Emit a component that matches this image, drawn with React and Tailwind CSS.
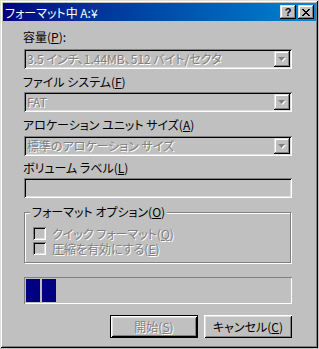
import React from 'react'

const jp = "font-['Noto_Sans_CJK_JP',sans-serif] [font-feature-settings:'palt']"
const sunken = 'shadow-[inset_1px_1px_#808080,inset_-1px_-1px_#fff,inset_2px_2px_#000,inset_-2px_-2px_#dfdfdf]'
const raised = 'shadow-[inset_-1px_-1px_#000,inset_1px_1px_#dfdfdf,inset_-2px_-2px_#808080,inset_2px_2px_#fff]'
const grayText = 'text-[#808080] [text-shadow:1px_1px_0_#fff]'

const Key = ({ children }) => <span className="underline underline-offset-1">{children}</span>

const Label = ({ children, className = '' }) => (
  <div className={`h-[14px] whitespace-nowrap text-[12px] leading-[14px] text-black ${className}`}>{children}</div>
)

const Arrow = () => (
  <svg width="8" height="5" viewBox="0 0 8 5">
    <path d="M1 1h7L4.5 5z" fill="#fff" />
    <path d="M0 0h7L3.5 4z" fill="#808080" />
  </svg>
)

const Combo = ({ value, className = '' }) => (
  <div className={`ml-[1px] flex h-[20px] w-[268px] items-center bg-[#c0c0c0] ${sunken} ${className}`}>
    <span className={`flex-1 whitespace-nowrap pl-[3px] text-[12px] leading-[14px] ${grayText}`}>{value}</span>
    <div className={`mr-[2px] flex h-[16px] w-[16px] shrink-0 items-center justify-center ${raised}`}>
      <Arrow />
    </div>
  </div>
)

const Check = ({ children }) => (
  <div className="flex h-[13px] items-center gap-[6px]">
    <div className={`h-[13px] w-[13px] shrink-0 bg-[#c0c0c0] ${sunken}`} />
    <span className={`whitespace-nowrap text-[12px] leading-[13px] ${grayText}`}>{children}</span>
  </div>
)

export default function App() {
  return (
    <div className={`h-[349px] w-[319px] bg-[#c0c0c0] ${jp}`}>
      <div className="flex h-[348px] w-[318px] flex-col pl-[3px] pr-[2px] pt-[3px] shadow-[inset_1px_1px_#dfdfdf,inset_-1px_-1px_#000,inset_2px_2px_#fff,inset_-2px_-2px_#808080]">
        {/* title bar */}
        <div className="flex h-[18px] items-center bg-gradient-to-r from-[#000080] to-[#1084d0] pl-[2px] pr-[2px]">
          <span className="flex-1 pt-[1px] text-[12px] leading-[14px] text-white">フォーマット中 A:¥</span>
          <div className={`flex h-[14px] w-[16px] items-center justify-center bg-[#c0c0c0] ${raised}`}>
            <span className="font-['Liberation_Sans',sans-serif] text-[11px] font-bold leading-[11px] text-black">?</span>
          </div>
          <div className={`ml-[2px] flex h-[14px] w-[16px] items-center justify-center bg-[#c0c0c0] ${raised}`}>
            <svg width="8" height="7" viewBox="0 0 8 7" shapeRendering="crispEdges">
              <path d="M0 0h2v1h-2zM6 0h2v1h-2zM1 1h2v1h-2zM5 1h2v1h-2zM2 2h4v1h-4zM3 3h2v1h-2zM2 4h4v1h-4zM1 5h2v1h-2zM5 5h2v1h-2zM0 6h2v1h-2zM6 6h2v1h-2z" fill="#000" />
            </svg>
          </div>
        </div>

        {/* body */}
        <div className="flex flex-col pl-[20px]">
          <Label className="mt-[9px]">容量(<Key>P</Key>):</Label>
          <Combo className="mt-[5px]" value="3.5 インチ、1.44MB、512 バイト/セクタ" />

          <Label className="mt-[6px]">ファイル システム(<Key>F</Key>)</Label>
          <Combo className="mt-[3px]" value="FAT" />

          <Label className="mt-[6px]">アロケーション ユニット サイズ(<Key>A</Key>)</Label>
          <Combo className="mt-[4px]" value="標準のアロケーション サイズ" />

          <Label className="mt-[5px]">ボリューム ラベル(<Key>L</Key>)</Label>
          <div className={`ml-[1px] mt-[3px] h-[20px] w-[268px] bg-[#c0c0c0] ${sunken}`} />

          <div className="relative ml-[1px] mt-[14px] flex h-[51px] w-[267px] flex-col gap-[2px] border border-[#808080] pl-[8px] pt-[14px] shadow-[1px_1px_0_#fff,inset_1px_1px_0_#fff]">
            <span className="absolute left-[5px] top-[-8px] whitespace-nowrap bg-[#c0c0c0] px-[2px] text-[12px] leading-[14px] text-black">
              フォーマット オプション(<Key>O</Key>)
            </span>
            <Check>クイック フォーマット(<Key>Q</Key>)</Check>
            <Check>圧縮を有効にする(<Key>E</Key>)</Check>
          </div>

          <div className="ml-[1px] mt-[14px] flex h-[27px] w-[268px] gap-[2px] p-[2px] shadow-[inset_1px_1px_#808080,inset_-1px_-1px_#fff]">
            <div className="h-full w-[14px] bg-[#000080]" />
            <div className="h-full w-[14px] bg-[#000080]" />
          </div>

          <div className="ml-[87px] mt-[11px] flex gap-[6px]">
            <div className="flex h-[23px] w-[88px] items-center justify-center border border-black shadow-[inset_1px_1px_#fff,inset_-1px_-1px_#000,inset_2px_2px_#dfdfdf,inset_-2px_-2px_#808080]">
              <span className={`text-[12px] leading-[14px] ${grayText}`}>開始(<Key>S</Key>)</span>
            </div>
            <div className="flex h-[23px] w-[88px] items-center justify-center shadow-[inset_1px_1px_#fff,inset_-1px_-1px_#000,inset_2px_2px_#dfdfdf,inset_-2px_-2px_#808080]">
              <span className="text-[12px] leading-[14px] text-black">キャンセル(<Key>C</Key>)</span>
            </div>
          </div>
        </div>
      </div>
    </div>
  )
}
